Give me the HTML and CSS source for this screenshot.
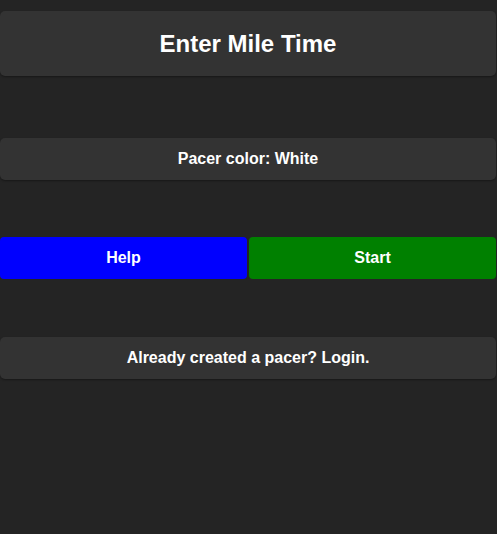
FILE: index.html
```html
<!DOCTYPE html>
<html>
<head>
<meta charset="utf-8">
<link rel="stylesheet" href="styles.css">
</head>
<body>
<div class="page">
  <div class="panel title">Enter Mile Time</div>
  <div class="panel pacer">Pacer color: White</div>
  <div class="buttons">
    <div class="btn help">Help</div>
    <div class="btn start">Start</div>
  </div>
  <div class="panel pacer login">Already created a pacer? Login.</div>
</div>
</body>
</html>
```
FILE: styles.css
```css
html, body {
  margin: 0;
  padding: 0;
  background: #242424;
  height: 100%;
}
body {
  font-family: "Liberation Sans", Arial, sans-serif;
  color: #fff;
  font-weight: bold;
}
.page {
  display: flex;
  flex-direction: column;
  padding: 11px 1px 0 0;
}
.panel {
  background: #333333;
  border-radius: 5px;
  box-shadow: 0 1px 2px rgba(0,0,0,0.35);
  display: flex;
  align-items: center;
  justify-content: center;
}
.title {
  height: 65px;
  font-size: 24px;
}
.pacer {
  height: 42px;
  font-size: 16px;
  margin-top: 62px;
}
.buttons {
  display: flex;
  gap: 2px;
  margin-top: 57px;
}
.btn {
  flex: 1;
  height: 42px;
  border-radius: 4px;
  display: flex;
  align-items: center;
  justify-content: center;
  font-size: 16px;
}
.help { background: #0000ff; }
.start { background: #008000; }
.login {
  margin-top: 58px;
}
```
